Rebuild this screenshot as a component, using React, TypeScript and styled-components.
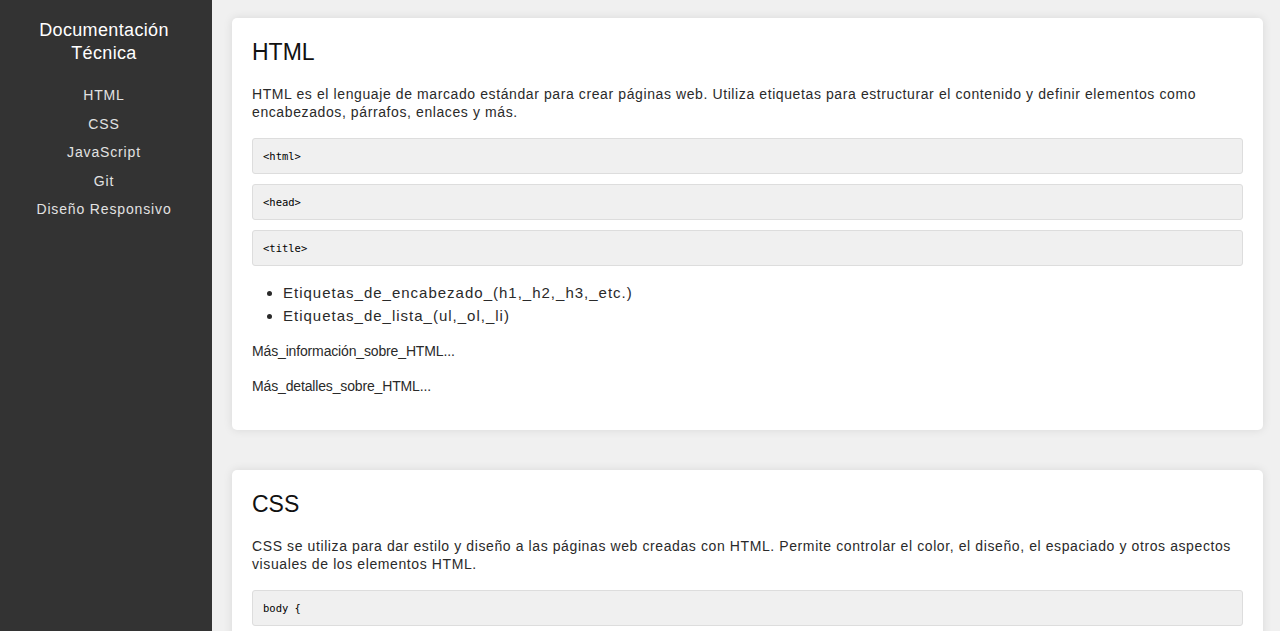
import React from "react";
import styled, { createGlobalStyle } from "styled-components";

const GlobalStyle = createGlobalStyle`
  html, body {
    margin: 0;
    padding: 0;
    background: #f0f0f0;
    font-family: "Liberation Sans", Arial, sans-serif;
    color: #333;
  }
`;

const Page = styled.div`
  display: flex;
  min-height: 100vh;
`;

const Sidebar = styled.nav`
  flex: 0 0 212px;
  background: #333;
  color: #fff;
  padding: 19px 4px 0 0;
  box-sizing: border-box;
  text-align: center;
`;

const SideTitle = styled.h1`
  margin: 0 0 16px;
  font-size: 18px;
  font-weight: normal;
  line-height: 23px;
  letter-spacing: 0.35px;
  color: #fff;
`;

const NavList = styled.ul`
  list-style: none;
  margin: 0;
  padding: 0;
`;

const NavLink = styled.a`
  display: block;
  padding: 5px 0;
  font-size: 14px;
  line-height: 18.5px;
  letter-spacing: 0.85px;
  color: #e2e2e2;
  text-decoration: none;
`;

const Main = styled.main`
  flex: 1;
  padding: 18px 17px 0 20px;
  min-width: 0;
`;

const Section = styled.section`
  background: #fff;
  border-radius: 5px;
  box-shadow: 0 0 10px rgba(0, 0, 0, 0.1);
  padding: 20px 20px 18px;
  margin-bottom: 40px;
`;

const Heading = styled.h2`
  margin: 0 0 19px;
  font-size: 23px;
  font-weight: normal;
  line-height: 28px;
  color: #111;
`;

const Text = styled.p<{ $wide?: boolean }>`
  margin: 17px 0;
  font-size: 14px;
  line-height: 18px;
  letter-spacing: ${(p) => (p.$wide ? "0.6px" : "-0.15px")};
  color: #2a2a2a;
`;

const Code = styled.pre`
  margin: 10px 0;
  padding: 10px;
  background: #f0f0f0;
  border: 1px solid #ddd;
  border-radius: 3px;
  font-family: "DejaVu Sans Mono", "Liberation Mono", monospace;
  font-size: 10.5px;
  line-height: 14px;
  color: #000;
  white-space: pre;
  overflow: hidden;
`;

const Bullets = styled.ul`
  margin: 18px 0 17px;
  padding-left: 31px;
  font-size: 15px;
  line-height: 18px;
  letter-spacing: 1px;
  color: #2a2a2a;
`;

const Bullet = styled.li`
  margin-bottom: 5px;
  &:last-child {
    margin-bottom: 0;
  }
`;

type Doc = {
  id: string;
  title: string;
  intro: string;
  code: string[];
  items: string[];
  more: string[];
};

const docs: Doc[] = [
  {
    id: "html",
    title: "HTML",
    intro:
      "HTML es el lenguaje de marcado estándar para crear páginas web. Utiliza etiquetas para estructurar el contenido y definir elementos como encabezados, párrafos, enlaces y más.",
    code: ["<html>", "<head>", "<title>"],
    items: [
      "Etiquetas_de_encabezado_(h1,_h2,_h3,_etc.)",
      "Etiquetas_de_lista_(ul,_ol,_li)",
    ],
    more: ["Más_información_sobre_HTML...", "Más_detalles_sobre_HTML..."],
  },
  {
    id: "css",
    title: "CSS",
    intro:
      "CSS se utiliza para dar estilo y diseño a las páginas web creadas con HTML. Permite controlar el color, el diseño, el espaciado y otros aspectos visuales de los elementos HTML.",
    code: ["body {", "  font-family: Arial, sans-serif;", "}"],
    items: ["Selectores_de_CSS", "Propiedades_de_CSS"],
    more: ["Más_información_sobre_CSS...", "Más_detalles_sobre_CSS..."],
  },
  {
    id: "javascript",
    title: "JavaScript",
    intro:
      "JavaScript es un lenguaje de programación que permite agregar interactividad y dinamismo a las páginas web.",
    code: ["function saludar() {", "  console.log('Hola');", "}"],
    items: ["Variables_y_tipos_de_datos", "Funciones_y_eventos"],
    more: ["Más_información_sobre_JavaScript...", "Más_detalles_sobre_JavaScript..."],
  },
  {
    id: "git",
    title: "Git",
    intro:
      "Git es un sistema de control de versiones que permite registrar los cambios en el código y colaborar con otros desarrolladores.",
    code: ["git init", "git add .", "git commit -m \"mensaje\""],
    items: ["Ramas_y_fusiones", "Repositorios_remotos"],
    more: ["Más_información_sobre_Git...", "Más_detalles_sobre_Git..."],
  },
  {
    id: "responsive",
    title: "Diseño Responsivo",
    intro:
      "El diseño responsivo permite que las páginas web se adapten a diferentes tamaños de pantalla y dispositivos.",
    code: ["@media (max-width: 768px) {", "  ...", "}"],
    items: ["Media_queries", "Unidades_relativas"],
    more: ["Más_información_sobre_Diseño_Responsivo...", "Más_detalles_sobre_Diseño_Responsivo..."],
  },
];

export default function App() {
  return (
    <>
      <GlobalStyle />
      <Page>
        <Sidebar>
          <SideTitle>
            Documentación
            <br />
            Técnica
          </SideTitle>
          <NavList>
            {docs.map((d) => (
              <li key={d.id}>
                <NavLink href={`#${d.id}`}>{d.title}</NavLink>
              </li>
            ))}
          </NavList>
        </Sidebar>
        <Main>
          {docs.map((d) => (
            <Section key={d.id} id={d.id}>
              <Heading>{d.title}</Heading>
              <Text $wide>{d.intro}</Text>
              {d.code.map((c, i) => (
                <Code key={i}>{c}</Code>
              ))}
              <Bullets>
                {d.items.map((it) => (
                  <Bullet key={it}>{it}</Bullet>
                ))}
              </Bullets>
              {d.more.map((m) => (
                <Text key={m}>{m}</Text>
              ))}
            </Section>
          ))}
        </Main>
      </Page>
    </>
  );
}
